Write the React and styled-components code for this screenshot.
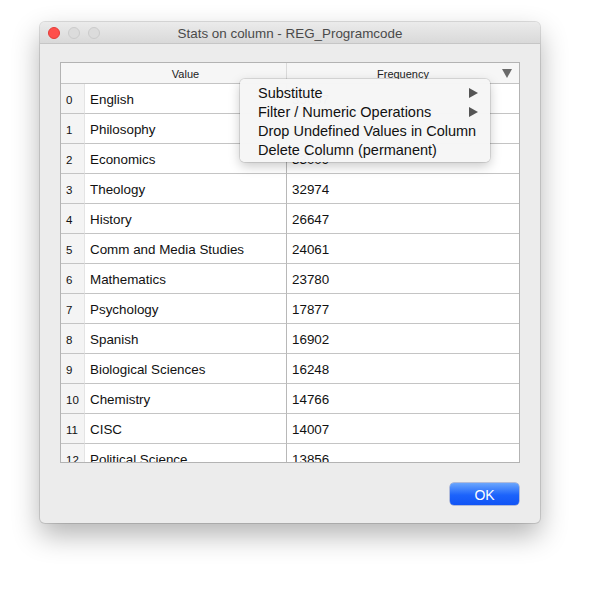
import React from "react";
import styled, { createGlobalStyle } from "styled-components";

const GlobalStyle = createGlobalStyle`
  html, body {
    margin: 0;
    background: #ffffff;
    font-family: "Liberation Sans", Arial, sans-serif;
  }
`;

const Page = styled.div`
  width: 593px;
  height: 592px;
  padding: 22px 0 0 40px;
  box-sizing: border-box;
`;

const Window = styled.div`
  width: 500px;
  height: 501px;
  display: flex;
  flex-direction: column;
  border-radius: 5px;
  background: #ececec;
  box-shadow: 0 0 0 1px rgba(0, 0, 0, 0.12), 0 12px 28px rgba(0, 0, 0, 0.3);
`;

const TitleBar = styled.div`
  height: 22px;
  display: grid;
  grid-template-columns: 1fr auto 1fr;
  align-items: center;
  padding: 0 8px;
  border-radius: 5px 5px 0 0;
  background: linear-gradient(#ebebeb, #d9d9d9);
  border-bottom: 1px solid #c6c6c6;
`;

const Lights = styled.div`
  display: flex;
  gap: 8px;
`;

const Light = styled.span`
  width: 12px;
  height: 12px;
  border-radius: 50%;
  box-sizing: border-box;
  background: ${(p) => (p.$red ? "#fe4f4b" : "#dcdcdc")};
  border: 1px solid ${(p) => (p.$red ? "#e33c38" : "#cbcbcb")};
`;

const Title = styled.div`
  font-size: 13.4px;
  color: #4a4a4a;
  white-space: nowrap;
  padding-top: 1px;
`;

const Body = styled.div`
  flex: 1;
  display: flex;
  flex-direction: column;
  padding: 18px 21px 18px 20px;
`;

const Table = styled.div`
  position: relative;
  width: 460px;
  height: 401px;
  box-sizing: border-box;
  border: 1px solid #b3b3b3;
  background: #ffffff;
  overflow: hidden;
`;

const Grid = styled.div`
  display: grid;
  grid-template-columns: 24px 201px 1fr;
`;

const HeadCell = styled.div`
  height: 21px;
  box-sizing: border-box;
  padding-top: 2px;
  display: flex;
  align-items: center;
  justify-content: center;
  position: relative;
  font-size: 11px;
  color: #222;
  background: #f6f6f6;
  border-bottom: 1px solid #c4c4c4;
  border-left: ${(p) => (p.$sep ? "1px solid #dadada" : "none")};
`;

const SortArrow = styled.span`
  position: absolute;
  right: 7px;
  top: 6px;
  width: 0;
  height: 0;
  border-left: 5px solid transparent;
  border-right: 5px solid transparent;
  border-top: 9px solid #6a6a6a;
`;

const IndexCell = styled.div`
  height: 30px;
  box-sizing: border-box;
  padding: 2px 0 0 5px;
  display: flex;
  align-items: center;
  font-size: 11.5px;
  color: #111;
  background: #f4f4f4;
  border-bottom: 1px solid #c4c4c4;
  border-right: 1px solid #e4e4e4;
`;

const Cell = styled.div`
  height: 30px;
  box-sizing: border-box;
  padding: 2px 0 0 5px;
  display: flex;
  align-items: center;
  font-size: 13.4px;
  color: #111;
  border-bottom: 1px solid #c4c4c4;
  border-left: ${(p) => (p.$num ? "1px solid #b8b8b8" : "none")};
  white-space: nowrap;
`;

const Menu = styled.div`
  position: absolute;
  left: 179px;
  top: 16px;
  width: 250px;
  height: 83px;
  box-sizing: border-box;
  padding: 5px 0 3px;
  border-radius: 5px;
  background: rgba(246, 246, 246, 0.98);
  box-shadow: 0 0 0 1px rgba(0, 0, 0, 0.1), 0 4px 12px rgba(0, 0, 0, 0.22);
  display: flex;
  flex-direction: column;
`;

const MenuItem = styled.div`
  height: 19px;
  display: flex;
  align-items: center;
  justify-content: space-between;
  padding: 0 12px 0 18px;
  font-size: 14.5px;
  color: #111;
  white-space: nowrap;
`;

const SubArrow = styled.span`
  width: 0;
  height: 0;
  border-top: 5px solid transparent;
  border-bottom: 5px solid transparent;
  border-left: 9px solid #555;
`;

const Footer = styled.div`
  display: flex;
  justify-content: flex-end;
  margin-top: 20px;
`;

const OkButton = styled.button`
  width: 69px;
  height: 22px;
  border: none;
  border-radius: 4px;
  background: linear-gradient(#6aa6fd, #1c63fb 55%, #1154f5);
  box-shadow: 0 0 0 0.5px rgba(0, 40, 160, 0.5);
  color: #ffffff;
  font-family: "Liberation Sans", Arial, sans-serif;
  font-size: 14px;
  padding: 1px 0 0;
`;

const rows = [
  ["English", "35037"],
  ["Philosophy", "34105"],
  ["Economics", "33009"],
  ["Theology", "32974"],
  ["History", "26647"],
  ["Comm and Media Studies", "24061"],
  ["Mathematics", "23780"],
  ["Psychology", "17877"],
  ["Spanish", "16902"],
  ["Biological Sciences", "16248"],
  ["Chemistry", "14766"],
  ["CISC", "14007"],
  ["Political Science", "13856"],
];

const menuItems = [
  ["Substitute", true],
  ["Filter / Numeric Operations", true],
  ["Drop Undefined Values in Column", false],
  ["Delete Column (permanent)", false],
];

export default function App() {
  return (
    <>
      <GlobalStyle />
      <Page>
        <Window>
          <TitleBar>
            <Lights>
              <Light $red />
              <Light />
              <Light />
            </Lights>
            <Title>Stats on column - REG_Programcode</Title>
            <span />
          </TitleBar>
          <Body>
            <Table>
              <Grid>
                <HeadCell />
                <HeadCell>Value</HeadCell>
                <HeadCell $sep>
                  Frequency
                  <SortArrow />
                </HeadCell>
                {rows.map(([name, freq], i) => (
                  <React.Fragment key={name}>
                    <IndexCell>{i}</IndexCell>
                    <Cell>{name}</Cell>
                    <Cell $num>{freq}</Cell>
                  </React.Fragment>
                ))}
              </Grid>
              <Menu>
                {menuItems.map(([label, sub]) => (
                  <MenuItem key={label}>
                    {label}
                    {sub && <SubArrow />}
                  </MenuItem>
                ))}
              </Menu>
            </Table>
            <Footer>
              <OkButton>OK</OkButton>
            </Footer>
          </Body>
        </Window>
      </Page>
    </>
  );
}
